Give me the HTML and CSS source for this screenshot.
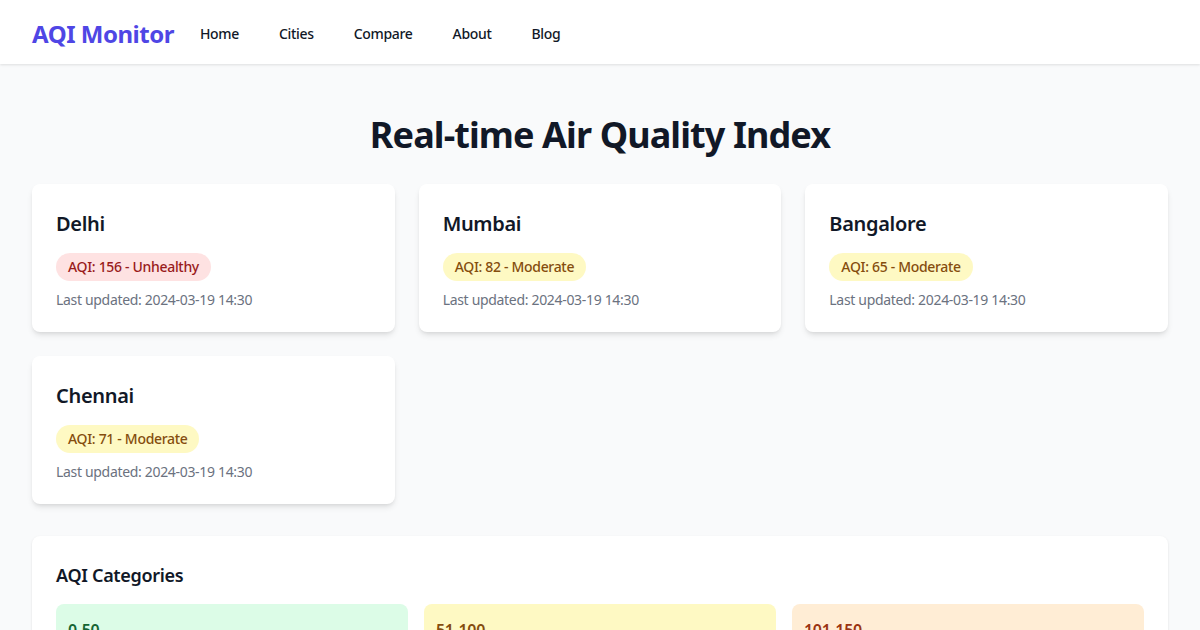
FILE: index.html
```html
<!DOCTYPE html>
<html lang="en">
<head>
<meta charset="utf-8">
<title>AQI Monitor</title>
<link rel="stylesheet" href="styles.css">
</head>
<body>
<nav class="navbar">
  <div class="nav-inner">
    <a class="logo" href="#">AQI Monitor</a>
    <div class="nav-links">
      <a href="#">Home</a>
      <a href="#">Cities</a>
      <a href="#">Compare</a>
      <a href="#">About</a>
      <a href="#">Blog</a>
    </div>
  </div>
</nav>
<main class="main">
  <h1 class="page-title">Real-time Air Quality Index</h1>
  <div class="city-grid">
    <div class="card">
      <h2 class="city-name">Delhi</h2>
      <span class="badge badge-red">AQI: 156 - Unhealthy</span>
      <p class="updated">Last updated: 2024-03-19 14:30</p>
    </div>
    <div class="card">
      <h2 class="city-name">Mumbai</h2>
      <span class="badge badge-yellow">AQI: 82 - Moderate</span>
      <p class="updated">Last updated: 2024-03-19 14:30</p>
    </div>
    <div class="card">
      <h2 class="city-name">Bangalore</h2>
      <span class="badge badge-yellow">AQI: 65 - Moderate</span>
      <p class="updated">Last updated: 2024-03-19 14:30</p>
    </div>
    <div class="card">
      <h2 class="city-name">Chennai</h2>
      <span class="badge badge-yellow">AQI: 71 - Moderate</span>
      <p class="updated">Last updated: 2024-03-19 14:30</p>
    </div>
  </div>
  <section class="categories">
    <h3 class="cat-title">AQI Categories</h3>
    <div class="cat-grid">
      <div class="cat cat-green"><p class="cat-range">0-50</p><p class="cat-label">Good</p></div>
      <div class="cat cat-yellow"><p class="cat-range">51-100</p><p class="cat-label">Moderate</p></div>
      <div class="cat cat-orange"><p class="cat-range">101-150</p><p class="cat-label">Unhealthy for Sensitive Groups</p></div>
    </div>
  </section>
</main>
</body>
</html>
```
FILE: styles.css
```css
* { box-sizing: border-box; }
html, body { margin: 0; padding: 0; }
body {
  font-family: "Noto Sans", "Open Sans", sans-serif;
  letter-spacing: -0.02em;
  background: #f9fafb;
  color: #111827;
}
a { text-decoration: none; color: inherit; }
h1, h2, h3, p { margin: 0; }

.navbar {
  background: #fff;
  box-shadow: 0 1px 3px rgba(0,0,0,0.08), 0 1px 2px rgba(0,0,0,0.04);
}
.nav-inner {
  height: 64px;
  padding: 4px 32px 0;
  display: flex;
  align-items: center;
}
.logo {
  font-size: 24px;
  line-height: 32px;
  font-weight: 700;
  color: #4f46e5;
  letter-spacing: -0.02em;
}
.nav-links {
  display: flex;
  gap: 16px;
  margin-left: 14px;
}
.nav-links a {
  padding: 8px 12px;
  font-size: 14px;
  line-height: 20px;
  font-weight: 500;
  color: #111827;
}

.main {
  padding: 51px 32px 48px;
}
.page-title {
  font-size: 36px;
  line-height: 40px;
  font-weight: 700;
  letter-spacing: -0.025em;
  text-align: center;
  margin-bottom: 29px;
  color: #111827;
}
.city-grid {
  display: grid;
  grid-template-columns: repeat(3, 1fr);
  gap: 24px;
}
.card {
  background: #fff;
  border-radius: 8px;
  padding: 26px 24px 22px;
  box-shadow: 0 4px 6px -1px rgba(0,0,0,0.1), 0 2px 4px -2px rgba(0,0,0,0.1);
}
.city-name {
  font-size: 20px;
  line-height: 28px;
  font-weight: 600;
  margin-bottom: 15px;
  color: #111827;
}
.badge {
  display: inline-block;
  padding: 4px 12px;
  border-radius: 9999px;
  font-size: 14px;
  line-height: 20px;
  font-weight: 500;
}
.badge-red { background: #fee2e2; color: #991b1b; }
.badge-yellow { background: #fef9c3; color: #854d0e; }
.updated {
  margin-top: 9px;
  font-size: 14px;
  line-height: 20px;
  color: #6b7280;
}

.categories {
  margin-top: 32px;
  background: #fff;
  border-radius: 8px;
  padding: 25px 24px 24px;
  box-shadow: 0 1px 3px rgba(0,0,0,0.08), 0 1px 2px rgba(0,0,0,0.04);
}
.cat-title {
  font-size: 18px;
  line-height: 28px;
  font-weight: 600;
  margin-bottom: 15px;
}
.cat-grid {
  display: grid;
  grid-template-columns: repeat(3, 1fr);
  gap: 16px;
}
.cat {
  border-radius: 8px;
  padding: 14px 12px 12px;
}
.cat-range { font-weight: 600; font-size: 16px; line-height: 24px; }
.cat-label { font-size: 14px; line-height: 20px; }
.cat-green { background: #dcfce7; color: #166534; }
.cat-yellow { background: #fef9c3; color: #854d0e; }
.cat-orange { background: #ffedd5; color: #9a3412; }
```
